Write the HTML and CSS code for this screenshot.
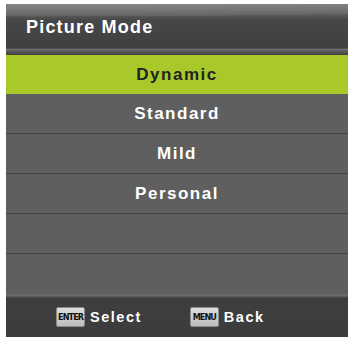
FILE: index.html
```html
<!DOCTYPE html>
<html>
<head>
<meta charset="utf-8">
<link rel="stylesheet" href="styles.css">
</head>
<body>
<div class="screen">
  <div class="header">
    <div class="title">Picture Mode</div>
  </div>
  <div class="header-rule"></div>
  <div class="list">
    <div class="item selected">Dynamic</div>
    <div class="item first">Standard</div>
    <div class="item">Mild</div>
    <div class="item">Personal</div>
    <div class="item"></div>
    <div class="item"></div>
  </div>
  <div class="footer">
    <div class="hint"><span class="key">ENTER</span><span class="label">Select</span></div>
    <div class="hint"><span class="key">MENU</span><span class="label">Back</span></div>
  </div>
</div>
</body>
</html>
```
FILE: styles.css
```css
html, body {
  margin: 0;
  padding: 0;
  background: #ffffff;
}
body {
  font-family: "Liberation Sans", Arial, sans-serif;
  overflow: hidden;
}
.screen {
  margin: 4px 0 0 6px;
  width: 342px;
  height: 333px;
  display: flex;
  flex-direction: column;
  background: #5f5f5f;
}
.header {
  height: 44px;
  background:
    radial-gradient(ellipse 260% 55% at 10% -5%, rgba(150,150,150,0.55) 0%, rgba(120,120,120,0.35) 60%, rgba(0,0,0,0) 61%),
    linear-gradient(#7a7a7a 0px, #5e5e5e 10px, #474747 16px, #404040 44px);
  display: flex;
  align-items: center;
}
.title {
  padding-left: 20px;
  margin-top: 2px;
  color: #ffffff;
  font-weight: bold;
  font-size: 18px;
  letter-spacing: 1.2px;
}
.header-rule {
  height: 7px;
  background: linear-gradient(#3a3a3a 0px, #6c6c6c 1px, #6c6c6c 2px, #585858 3px, #4a4a4a 6px, #3c3c3c 7px);
}
.list {
  display: flex;
  flex-direction: column;
}
.item {
  height: 40px;
  box-sizing: border-box;
  border-top: 1px solid #434343;
  background: #5f5f5f;
  color: #ffffff;
  font-weight: bold;
  font-size: 17px;
  letter-spacing: 1.5px;
  display: flex;
  align-items: center;
  justify-content: center;
}
.item.selected {
  height: 39px;
  border-top: none;
  background: #a9c92b;
  color: #222222;
}
.item.first {
  height: 39px;
  border-top: none;
}
.footer {
  flex: 1;
  background: linear-gradient(#5a5a5a 0px, #6e6e6e 2px, #666666 3px, #3e3e3e 5px, #3c3c3c 100%);
  display: flex;
  align-items: center;
  padding: 4px 0 0 50px;
  gap: 48px;
}
.hint {
  display: flex;
  align-items: center;
  gap: 5px;
}
.key {
  display: inline-block;
  height: 18px;
  line-height: 18px;
  padding: 0 1px;
  min-width: 25px;
  text-align: center;
  background: linear-gradient(#dedede, #bcbcbc);
  border: 1px solid #8c8c8c;
  border-radius: 2px;
  color: #111111;
  font-family: "DejaVu Sans Condensed", "Liberation Sans", sans-serif;
  font-weight: bold;
  font-size: 9px;
  letter-spacing: -0.9px;
}
.label {
  color: #ffffff;
  font-weight: bold;
  font-size: 14.5px;
  letter-spacing: 1.5px;
}
```
